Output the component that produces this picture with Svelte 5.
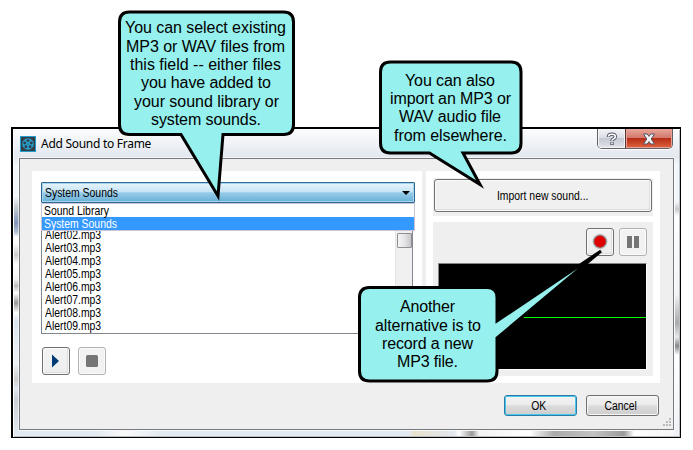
<script>
  const options = ['Sound Library', 'System Sounds'];
  const sounds = ['Alert02.mp3', 'Alert03.mp3', 'Alert04.mp3', 'Alert05.mp3', 'Alert06.mp3', 'Alert07.mp3', 'Alert08.mp3', 'Alert09.mp3'];
  const callouts = [
    {
      path: 'M129.5 12H283.5Q293.5 12 293.5 22V124.5Q293.5 134.5 283.5 134.5H223L218 196L181 134.5H129.5Q119.5 134.5 119.5 124.5V22Q119.5 12 129.5 12Z',
      lines: [
        ['You can select existing', 125, 33, 161], ['MP3 or WAV files from', 126, 52, 159],
        ['this field -- either files', 130, 70, 151], ['you have added to', 141, 88, 130],
        ['your sound library or', 134, 107, 145], ['system sounds.', 151, 125, 110]
      ]
    },
    {
      path: 'M390.5 62H511Q521 62 521 72V143Q521 153 511 153H463L480 184.5L429.5 153H390.5Q380.5 153 380.5 143V72Q380.5 62 390.5 62Z',
      lines: [
        ['You can also', 405, 86, 90], ['import an MP3 or', 390, 104, 121],
        ['WAV audio file', 399, 122, 102], ['from elsewhere.', 394, 141, 113]
      ]
    },
    {
      path: 'M369.5 287.5H487Q497 287.5 497 297.5V321L601 251L497 338V371Q497 381 487 381H369.5Q359.5 381 359.5 371V297.5Q359.5 287.5 369.5 287.5Z',
      lines: [
        ['Another', 400, 312, 55], ['alternative is to', 375, 331, 106],
        ['record a new', 382, 349, 91], ['MP3 file.', 397, 367, 61]
      ]
    }
  ];
</script>

<main>
  <section class="window">
    <header>
      <svg class="reel" width="16" height="16" viewBox="0 0 16 16">
        <rect width="16" height="16" fill="#1f9fd0" /><rect x="1" y="1" width="14" height="14" fill="#343e47" />
        <circle cx="8" cy="8" r="5.8" fill="#2a9fc9" />
        <g fill="#29414f"><circle cx="8" cy="4.6" r="1.45" /><circle cx="11.3" cy="7" r="1.45" /><circle cx="10.1" cy="10.7" r="1.45" /><circle cx="5.9" cy="10.7" r="1.45" /><circle cx="4.7" cy="7" r="1.45" /><circle cx="8" cy="8" r=".6" /></g>
      </svg>
      <h1>Add Sound to Frame</h1>
      <div class="caption">
        <span class="help"><svg width="12" height="14" viewBox="0 0 12 14"><path d="M2.5 5V4.3Q2.5 2.2 6 2.2T9.300 4.700Q9.300 6 7.500 6.900Q6 7.600 6 8.600V9.100M6 10.200V13" fill="none" stroke="#525666" stroke-width="3.400" /><path d="M2.500 4.500Q2.500 2.300 6 2.300T9.300 4.700Q9.300 6 7.500 6.900Q6 7.600 6 8.700M6 10.700V12.300" fill="none" stroke="#fff" stroke-width="1.600" /></svg></span>
        <span class="close"><svg width="14" height="12" viewBox="0 0 14 12"><path d="M1.5 1H5.2L7 3.4L8.800 1H12.500L9.200 6L12.500 11H8.800L7 8.600L5.200 11H1.500L4.800 6Z" fill="#f5f5f7" stroke="#535666" /></svg></span>
      </div>
    </header>
    <div class="client">
      <div class="panels">
        <div class="library">
          <div class="combo"><span class="t">System Sounds</span><i></i></div>
          <div class="listwrap">
            <div class="options">
              {#each options as option, i}<div class:selected={i === 1}><span class="t">{option}</span></div>{/each}
            </div>
            <div class="list">
              <div class="names">{#each sounds as sound}<div><span class="t">{sound}</span></div>{/each}</div>
              <div class="scroll"><b></b></div>
            </div>
          </div>
          <div class="tools">
            <button aria-label="Play"><svg width="26" height="26"><path d="M9 6.5L16 13L9 19.5Z" fill="#003b75" /></svg></button>
            <button class="off" aria-label="Stop"><svg width="26" height="26"><rect x="7" y="7" width="12" height="12" rx="1.5" fill="#757575" /></svg></button>
          </div>
        </div>
        <div class="right">
          <div class="importbox"><button class="import"><span class="t c">Import new sound...</span></button></div>
          <div class="recorder">
            <div class="tools rec">
              <button aria-label="Record"><svg width="26" height="26"><circle cx="13" cy="12.5" r="7.5" fill="#b0b8b8" /><circle cx="13" cy="12.5" r="5.8" fill="#df0000" stroke="#a52020" stroke-width=".7" /></svg></button>
              <button class="off" aria-label="Pause"><svg width="26" height="26"><path d="M7 7h5v12H7zM14 7h5v12h-5z" fill="#757575" /></svg></button>
            </div>
            <div class="wave"><i></i></div>
          </div>
        </div>
      </div>
      <footer>
        <button class="ok"><span class="t c">OK</span></button>
        <button><span class="t c">Cancel</span></button>
      </footer>
      <svg class="grip" width="10" height="10"><path d="M7 0h2v2H7zM4 3h2v2H4zM7 3h2v2H7zM1 6h2v2H1zM4 6h2v2H4zM7 6h2v2H7z" fill="#b9b9b9" /></svg>
    </div>
  </section>

  <svg class="callouts" width="693" height="450">
    {#each callouts as callout}
      <path d={callout.path} fill="#96f0ed" stroke="#000" stroke-width="3" stroke-linejoin="miter" />
      {#each callout.lines as [line, x, y, width]}
        <text {x} {y} textLength={width}>{line}</text>
      {/each}
    {/each}
  </svg>
</main>

<style>
  :global(body) { background: #fff; }
  * { box-sizing: border-box; }
  main { position: relative; width: 693px; height: 450px; padding: 127px 0 0 11px; overflow: hidden; font: 12px/13px 'Liberation Sans', sans-serif; color: #000; }
  .window {
    width: 670px; height: 311px; border: 2px solid #000; border-right-width: 1px; border-bottom-width: 1px; padding: 0 6px 7px; display: flex; flex-direction: column;
    background:
      linear-gradient(transparent 68px, #d0d2d6 76px, #8397b8 94px, #b4bfd2 103px, #fff 108px, #f7f7f7 116px, #ccc 126px, #fff 135px, #f3f3f3 150px, #bbb 157px, #fff 164px, #999 174px, #fff 184px, #dbe5ef 192px, #edf2f7 235px, #ccc 250px, #e1e8f0 260px, #cbd0d6 270px, #e4ebf2) 1px 0 / 5px 100% no-repeat,
      linear-gradient(transparent 73px, #c8c8c8 80px, #fff 87px, #fff 94px, #fafafa 110px, #f4f4f4 165px, #aaa 194px, #e8e8e8 208px, #888 217px, #fff 226px, #eef1f4) 662px 0 / 5px 100% no-repeat,
      linear-gradient(90deg, #e2e9f0 80px, #fafafa 110px, #e2e9f0 150px, #e2e9f0 395px, #e8e1cc 400px, #e3e8ef 440px, #fff 445px, #999 458px, #f4f4f4 465px, #fff 516px, #aaa 540px, #c3c3c3 580px, #999 610px, #fff 620px, #f6f6f6) 1px 302px / 660px 5px no-repeat,
      linear-gradient(#fbfcfd, #e3e8ef 28px, #f3f7fb 36px, #eef2f5);
    box-shadow: inset 1px 1px #fff, inset -1px -1px #bbc0c5;
  }
  header { height: 29px; display: flex; align-items: flex-start; flex: none; }
  .reel { margin: 7px 0 0 1px; }
  h1 { margin: 6px 0 0 5px; font: 12px/17px 'Noto Sans', sans-serif; letter-spacing: -.28px; flex: 1; white-space: nowrap; }
  .caption { display: flex; width: 76px; height: 20px; margin-right: 1px; border: 1px solid #5f6268; border-top: 0; border-radius: 0 0 5px 5px; overflow: hidden; box-shadow: 0 1px #fff; }
  .help, .close { display: flex; align-items: center; justify-content: center; height: 100%; }
  .help { width: 27px; background: linear-gradient(#f2f3f6, #dadde4 48%, #c4c8d0 50%, #e2e5ea); box-shadow: inset 0 0 0 1px #f4f4f7; }
  .close { flex: 1; border-left: 1px solid #573331; background: linear-gradient(#e9a89c, #d17569 48%, #b72d16 50%, #e06540); box-shadow: inset 0 0 0 1px #e7a196; }
  .client { position: relative; flex: 1; border: 1px solid #777b80; background: #efefef; padding: 12px 12px 0; box-shadow: 0 0 0 1px #ffffff90; }
  .panels { display: flex; gap: 4px; height: 212px; }
  .library { width: 390px; padding: 11px 7px 0 9px; background: #fff; }
  .t { display: inline-block; white-space: nowrap; transform: scaleX(.868); transform-origin: left center; }
  .c { transform-origin: center; }
  .combo { height: 21px; padding: 1px 4px 0 3px; border: 1px solid #2f6891; border-radius: 1px; background: linear-gradient(#e8f5fc, #c3e3f4 48%, #98cce9 51%, #69afd7); box-shadow: inset 0 0 0 1px #a4d5ef; display: flex; justify-content: space-between; align-items: flex-end; padding-bottom: 2px; }
  .combo i { border: 4px solid transparent; border-top-color: #000; border-bottom: 0; margin-bottom: 5px; }
  .listwrap { height: 131px; display: flex; flex-direction: column; }
  .options { border: 1px solid #c9c4d7; height: 28px; flex: none; }
  .options div { height: 13px; padding-left: 2px; line-height: 15px; }
  .options .t { vertical-align: top; }
  .selected { background: #3399ff; color: #fff; }
  .list { flex: 1; width: 372px; border: 1px solid #828790; border-top: 0; display: flex; justify-content: space-between; overflow: hidden; }
  .names { padding-left: 3px; margin-top: -2px; }
  .names div { height: 13px; }
  .scroll { width: 17px; padding: 2px 1px; background: #f0f0f0; border-left: 1px solid #e6e6e6; }
  .scroll b { display: block; width: 15px; height: 15px; border: 1px solid #8e8e93; border-radius: 1px; background: linear-gradient(90deg, #f5f5f5, #e5e5e8 50%, #c6c6ca); }
  .tools { display: flex; gap: 8px; padding: 13px 0 0 1px; }
  button { padding: 0; border: 1px solid #707070; border-radius: 3px; background: #f0f0f0; box-shadow: inset 0 0 0 1px #fafafa, inset -2px -2px #dedede; font: inherit; display: flex; align-items: center; justify-content: center; color: #000; }
  .tools button { width: 28px; height: 28px; flex: none; background: linear-gradient(#f3f3f3, #eee); }
  .tools .off { border-color: #aeb2b5; background: #f2f2f2; box-shadow: inset 0 0 0 1px #fafafa; }
  .right { width: 234px; background: #fff; padding: 7px 7px 0; display: flex; flex-direction: column; gap: 6px; }
  .importbox { height: 38px; padding: 1px; background: #efefef; }
  .import { width: 218px; height: 33px; padding-top: 2px; }
  .recorder { height: 154px; background: #efefef; padding: 6px 6px 0 5px; }
  .rec { padding: 0; gap: 5px; justify-content: flex-end; }
  .wave { margin-top: 7px; height: 107px; border: 1px solid #858585; border-right-color: #fff; border-bottom-color: #fff; background: #000; display: flex; align-items: center; justify-content: flex-end; padding-top: 2px; }
  .wave i { height: 1px; width: 130px; background: #00ff00; }
  footer { display: flex; justify-content: flex-end; gap: 9px; padding: 12px 2px 0 0; }
  footer button { width: 73px; height: 21px; padding-top: 2px; background: linear-gradient(#f3f3f3, #ebebeb 48%, #dcdcdc 51%, #cecece); box-shadow: inset 0 0 0 1px #f6f6f6; }
  footer .c { margin-right: 3px; }
  footer .ok { border-color: #2d7ca5; box-shadow: inset 0 0 0 1px #46c7ee; }
  .grip { position: absolute; right: 1px; bottom: 1px; }
  .callouts { position: absolute; left: 0; top: 0; }
  .callouts text { font: 16px 'Liberation Sans', sans-serif; }
</style>
